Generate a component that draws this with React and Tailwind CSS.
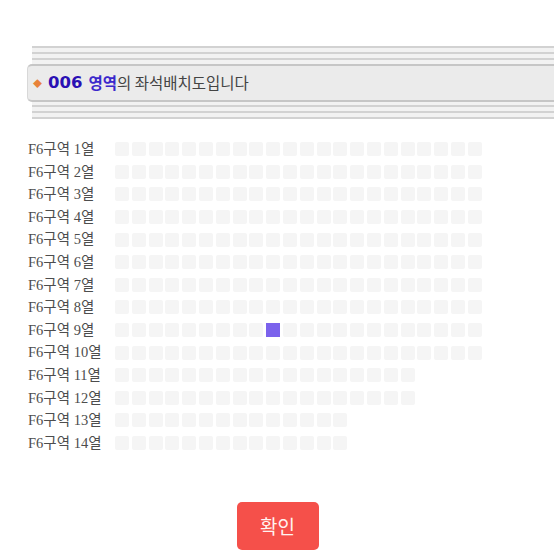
import React from "react";

const rows = [
  { n: 1, c: 22 }, { n: 2, c: 22 }, { n: 3, c: 22 }, { n: 4, c: 22 }, { n: 5, c: 22 },
  { n: 6, c: 22 }, { n: 7, c: 22 }, { n: 8, c: 22 }, { n: 9, c: 22, sel: 9 }, { n: 10, c: 22 },
  { n: 11, c: 18 }, { n: 12, c: 18 }, { n: 13, c: 14 }, { n: 14, c: 14 },
];

function Line() {
  return <div className="h-[2px] bg-[#d2d2d2]" />;
}

export default function App() {
  return (
    <div className="w-[554px] h-[554px] bg-white overflow-hidden" style={{ fontFamily: '"Noto Sans CJK KR", sans-serif' }}>
      {/* header band */}
      <div className="pt-[46px] pl-[27px]">
        <div className="ml-[5px] bg-[#f2f2f2] flex flex-col gap-[4px] pb-[4px]">
          <Line />
          <Line />
          <Line />
        </div>
        <div className="h-[38px] bg-[#ebebeb] border-t-2 border-b-2 border-l border-t-[#c6c6c6] border-b-[#c6c6c6] border-l-[#d8d8d8] rounded-l-[5px] flex items-center pl-[5px]">
          <span className="text-[#e8823a] text-[9px] leading-none mr-[6px]">◆</span>
          <span className="text-[16.5px] font-bold text-[#2a10b4] leading-none" style={{ fontFamily: '"DejaVu Sans", sans-serif' }}>006</span>
          <span className="text-[15.5px] font-bold text-[#3b29cc] ml-[6px] leading-none">영역</span>
          <span className="text-[15.5px] text-[#444] leading-none">의 좌석배치도입니다</span>
        </div>
        <div className="ml-[5px] bg-[#f2f2f2] flex flex-col gap-[4px] pt-[3px]">
          <Line />
          <Line />
          <Line />
        </div>
      </div>

      {/* seats */}
      <div className="mt-[19px] pl-[28px] flex flex-col">
        {rows.map((r) => (
          <div key={r.n} className="h-[22.6px] flex items-center">
            <div className="w-[87px] text-[14.5px] text-[#4d4d4d] leading-none" style={{ fontFamily: '"Liberation Serif", "Noto Sans CJK KR", serif' }}>
              F6구역 {r.n}열
            </div>
            <div className="flex gap-[2.8px]">
              {Array.from({ length: r.c }).map((_, i) => (
                <div
                  key={i}
                  className={
                    r.sel === i
                      ? "w-[14px] h-[14px] bg-[#7b62ec]"
                      : "w-[14px] h-[14px] rounded-[2px] bg-[#f5f5f5]"
                  }
                />
              ))}
            </div>
          </div>
        ))}
      </div>

      {/* button */}
      <div className="mt-[48px] flex justify-center pl-[1px]">
        <button className="w-[82px] h-[48px] rounded-[5px] bg-[#f5504a] text-[#fff3f0] text-[19px] flex items-center justify-center">
          확인
        </button>
      </div>
    </div>
  );
}
